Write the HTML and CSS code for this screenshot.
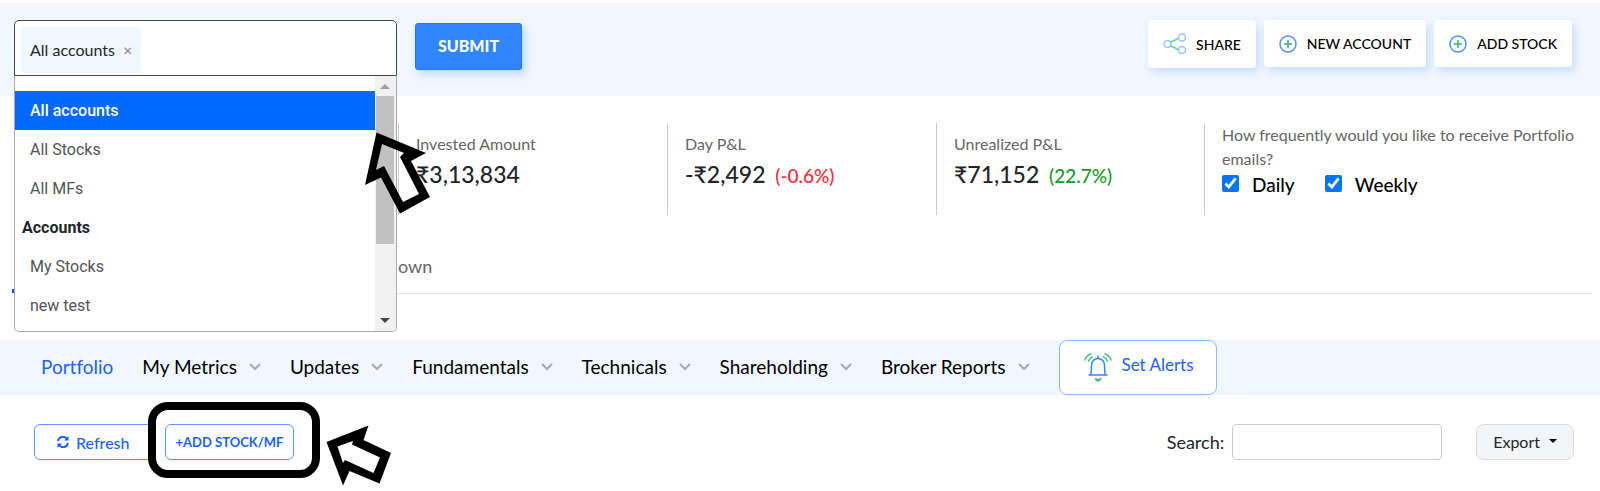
FILE: index.html
```html
<!DOCTYPE html>
<html lang="en">
<head>
<meta charset="UTF-8">
<title>Portfolio</title>
<link rel="stylesheet" href="styles.css">
</head>
<body>
<header class="topbar">
  <div class="account-select">
    <div class="select-box">
      <span class="chip">All accounts <button class="chip-remove" type="button" aria-label="Remove">×</button></span>
    </div>
    <div class="dropdown">
      <ul class="options" role="listbox" aria-label="Accounts">
        <li class="option selected" role="option" aria-selected="true">All accounts</li>
        <li class="option" role="option">All Stocks</li>
        <li class="option" role="option">All MFs</li>
        <li class="option-group">Accounts</li>
        <li class="option" role="option">My Stocks</li>
        <li class="option" role="option">new test</li>
      </ul>
      <div class="scrollbar">
        <svg width="20" height="20" viewBox="0 0 20 20"><path d="M5 13h10l-5-5z" fill="#9c9c9c"/></svg>
        <div class="thumb"></div>
        <svg class="scroll-down" width="20" height="20" viewBox="0 0 20 20"><path d="M5 7h10l-5 5z" fill="#444"/></svg>
      </div>
    </div>
    <svg class="pointer-select" width="68" height="86" viewBox="0 0 68 86"><path fill-rule="evenodd" d="M12.500 3.500L62 24L47 32L66 68L36 84.500L17 48.500L1 56ZM18 15L12 41L20 37L39 73L55 65L36 28L40 24Z"/></svg>
  </div>
  <button class="submit" type="button">SUBMIT</button>
  <div class="actions">
    <button class="action share" type="button">
      <svg width="24" height="22" viewBox="0 0 24 22" fill="none"><path d="M7 9.500l8-4M7 12.500l8 4" stroke="#5fdc9c" stroke-width="1.500"/><g stroke="#9cc3fb" stroke-width="1.500"><circle cx="4.500" cy="11" r="3.500"/><circle cx="19" cy="4.500" r="3.500"/><circle cx="19" cy="17" r="3.500"/></g></svg>
      SHARE
    </button>
    <button class="action" type="button">
      <svg width="18" height="18" viewBox="0 0 18 18" fill="none"><circle cx="9" cy="9" r="8" stroke="#4c92fb" stroke-width="1.500"/><path d="M9 5v8M5 9h8" stroke="#35b275" stroke-width="1.500"/></svg>
      NEW ACCOUNT
    </button>
    <button class="action" type="button">
      <svg width="18" height="18" viewBox="0 0 18 18" fill="none"><circle cx="9" cy="9" r="8" stroke="#4c92fb" stroke-width="1.500"/><path d="M9 5v8M5 9h8" stroke="#35b275" stroke-width="1.500"/></svg>
      ADD STOCK
    </button>
  </div>
</header>

<section class="summary">
  <div class="metric"></div>
  <div class="metric">
    <div class="label">Invested Amount</div>
    <div class="value">₹3,13,834</div>
  </div>
  <div class="metric">
    <div class="label">Day P&amp;L</div>
    <div class="value">-₹2,492 <span class="loss">(-0.6%)</span></div>
  </div>
  <div class="metric">
    <div class="label">Unrealized P&amp;L</div>
    <div class="value">₹71,152 <span class="gain">(22.7%)</span></div>
  </div>
  <div class="metric emails">
    <div class="label">How frequently would you like to receive Portfolio emails?</div>
    <div class="checks">
      <label><input type="checkbox" checked> Daily</label>
      <label><input type="checkbox" checked> Weekly</label>
    </div>
  </div>
</section>

<div class="tabs"><a class="tab" href="#">own</a></div>

<nav class="menu">
  <a class="active" href="#">Portfolio</a>
  <a href="#">My Metrics <svg width="12" height="8" viewBox="0 0 12 8"><path d="M1 1l5 5 5-5"/></svg></a>
  <a href="#">Updates <svg width="12" height="8" viewBox="0 0 12 8"><path d="M1 1l5 5 5-5"/></svg></a>
  <a href="#">Fundamentals <svg width="12" height="8" viewBox="0 0 12 8"><path d="M1 1l5 5 5-5"/></svg></a>
  <a href="#">Technicals <svg width="12" height="8" viewBox="0 0 12 8"><path d="M1 1l5 5 5-5"/></svg></a>
  <a href="#">Shareholding <svg width="12" height="8" viewBox="0 0 12 8"><path d="M1 1l5 5 5-5"/></svg></a>
  <a href="#">Broker Reports <svg width="12" height="8" viewBox="0 0 12 8"><path d="M1 1l5 5 5-5"/></svg></a>
  <button class="alerts" type="button">
    <svg width="28" height="30" viewBox="0 0 28 30" fill="none" stroke-linecap="round">
      <g stroke="#2f86ff" stroke-width="1.500"><path d="M5 22h18M7 21c0-2 .5-3 .5-9a6.500 6.500 0 0 1 13 0c0 6 .5 7 .5 9M14 5V3"/></g>
      <g stroke="#45bd84" stroke-width="1.500"><path d="M1 7q1.500-5 6-6M4.500 8q1-3 4-4M27 7q-1.500-5-6-6M23.500 8q-1-3-4-4M11.500 26q2.500 4 5 0q-2.500 1-5 0"/></g>
    </svg>
    <span>Set Alerts</span>
  </button>
</nav>

<div class="toolbar">
  <button class="outline refresh" type="button">
    <svg width="12" height="12" viewBox="0 0 12 12" fill="none" stroke="#1a62ff" stroke-width="2"><path d="M1 5a5 5 0 0 1 9-2M11 7a5 5 0 0 1-9 2"/><path d="M11.500 0v4.500H7zM.5 12V7.500H5z" fill="#1a62ff" stroke="none"/></svg>
    Refresh
  </button>
  <div class="highlight"><button class="outline add" type="button">+ADD STOCK/MF</button></div>
  <svg class="pointer-add" width="66" height="62" viewBox="0 0 66 62"><path fill-rule="evenodd" d="M.5 18L42.500 1.500L37.500 16L65 29L53.500 59.500L23.500 47L17 61.500ZM11.500 22.500L17 39L19 36L47.500 49L54 33.500L26 20.500L27 17Z"/></svg>
  <label class="search">Search: <input type="search"></label>
  <button class="export" type="button">Export <svg width="8" height="4" viewBox="0 0 8 4"><path d="M0 0h8L4 4z"/></svg></button>
</div>
</body>
</html>
```
FILE: styles.css
```css
* {
  box-sizing: border-box;
}
body {
  margin: 0;
  padding-top: 3px;
  background: #fff;
  color: #212529;
  font-family: Lato, "Liberation Sans", sans-serif;
  font-size: 16px;
  font-variant-ligatures: none;
}
button {
  font-family: inherit;
  cursor: pointer;
}
a {
  color: inherit;
  text-decoration: none;
}

/* top bar */
.topbar {
  display: flex;
  align-items: flex-start;
  height: 93px;
  padding: 17px 28px 0 14px;
  background: #f2f7ff;
}
.account-select {
  position: relative;
  width: 383px;
}
.select-box {
  height: 56px;
  padding: 6px;
  border: 1px solid #444;
  border-radius: 5px 5px 0 0;
  background: #fff;
}
.chip {
  display: inline-flex;
  align-items: center;
  gap: 8px;
  height: 46px;
  padding: 0 9px 2px;
  border-radius: 4px;
  background: #f2f7ff;
  font-size: 16px;
}
.chip-remove {
  padding: 0;
  border: 0;
  background: none;
  color: #888;
  font-size: 16px;
}
.dropdown {
  position: absolute;
  z-index: 2;
  top: 56px;
  left: 0;
  right: 0;
  display: flex;
  height: 256px;
  border: 1px solid #aaa;
  border-top: 0;
  border-radius: 0 0 5px 5px;
  background: #fff;
  overflow: hidden;
}
.options {
  flex: 1;
  margin: 0;
  padding: 15px 0 0;
  list-style: none;
  font-family: Roboto, sans-serif;
  line-height: 39px;
}
.option {
  padding-left: 15px;
  color: #555;
}
.option.selected {
  background: #0069ff;
  color: #fff;
  font-weight: 500;
}
.option-group {
  padding-left: 7px;
  font-weight: 700;
}
.scrollbar {
  display: flex;
  flex-direction: column;
  width: 21px;
  background: #f1f1f1;
}
.thumb {
  height: 148px;
  margin: 0 2px 0 1px;
  background: #c1c1c1;
}
.scroll-down {
  margin-top: auto;
}
.pointer-select {
  position: absolute;
  z-index: 3;
  top: 109px;
  left: 350px;
}
.submit {
  height: 47px;
  margin: 3px 0 0 18px;
  padding: 0 22px 2px;
  border: 1px solid #1677ff;
  border-radius: 3px;
  background: #2f86ff;
  box-shadow: 3px 4px 10px #b8d5ff;
  color: #fff;
  font-size: 16px;
  font-weight: 900;
}
.actions {
  display: flex;
  align-items: flex-start;
  gap: 8px;
  margin-left: auto;
}
.action {
  display: flex;
  align-items: center;
  gap: 10px;
  height: 47px;
  padding: 0 15px;
  border: 0;
  border-radius: 4px;
  background: #fff;
  box-shadow: 3px 4px 10px #c4dcff;
  color: #000;
  font-size: 14px;
  font-weight: 500;
}
.share {
  height: 48px;
  gap: 9px;
}

/* portfolio summary */
.summary {
  display: grid;
  grid-template-columns: 398px 269px 269px 268px 1fr;
  padding-top: 27px;
}
.metric {
  height: 92px;
  padding: 9px 17px;
  border-left: 1px solid #ccc;
}
.metric:first-child {
  border-left: 0;
}
.label {
  color: #666;
  line-height: 24px;
}
.value {
  color: #212529;
  font-size: 23px;
  font-weight: 500;
  line-height: 36px;
}
.value span {
  margin-left: 4px;
  font-size: 19px;
}
.value .loss {
  color: #ff2a35;
}
.value .gain {
  color: #149b28;
}
.emails {
  padding: 0 17px;
}
.checks {
  display: flex;
  gap: 30px;
  color: #000;
  font-size: 19px;
  font-weight: 500;
  line-height: 28px;
}
.checks label {
  display: flex;
  gap: 13px;
}
.checks input {
  width: 17px;
  height: 17px;
  margin: 4px 0 0;
  accent-color: #0075ff;
}
.tabs {
  display: flex;
  align-items: flex-end;
  height: 79px;
  margin: 0 8px 0 12px;
  border-bottom: 1px solid #e4e4e4;
}
/* marks the current tab */
.tabs::before {
  content: "";
  width: 120px;
  height: 4px;
  background: #1a4fff;
}
.tab {
  padding: 0 0 15px 266px;
  color: #666;
  font-size: 18px;
  line-height: 24px;
}

/* section menu */
.menu {
  display: flex;
  align-items: center;
  gap: 29px;
  height: 55px;
  margin-top: 46px;
  padding-left: 41px;
  background: #f2f7ff;
  color: #000;
  font-size: 19px;
}
.menu a {
  display: flex;
  align-items: center;
  gap: 12px;
  padding-bottom: 2px;
}
.menu a path {
  fill: none;
  stroke: #a3a9b8;
  stroke-width: 2;
}
.menu .active {
  color: #1a62ff;
}
.alerts {
  display: flex;
  align-items: center;
  gap: 10px;
  height: 55px;
  padding: 0 22px 0 24px;
  border: 1px solid #8dbbff;
  border-radius: 8px;
  background: #fff;
  color: #1a62ff;
  font-size: 17px;
}
.alerts span {
  padding-bottom: 6px;
}

/* table toolbar */
.toolbar {
  display: flex;
  align-items: flex-start;
  padding: 29px 26px 0 34px;
}
.outline {
  height: 36px;
  border: 1px solid #5b95ff;
  border-radius: 6px;
  background: #fff;
  color: #1a62ff;
}
.refresh {
  display: flex;
  align-items: center;
  gap: 7px;
  margin-right: -5px;
  padding: 0 22px;
  font-size: 16px;
  font-weight: 500;
}
.highlight {
  position: relative;
  margin-top: -22px;
  padding: 14px 18px 10px 9px;
  border: 8px solid #000;
  border-radius: 20px;
}
.add {
  padding: 0 10px;
  font-size: 13px;
  font-weight: 700;
}
.pointer-add {
  margin-left: 6px;
}
.search {
  display: flex;
  align-items: center;
  gap: 8px;
  margin-left: auto;
  font-size: 18px;
}
.search input {
  width: 210px;
  height: 36px;
  border: 1px solid #ccc;
  border-radius: 4px;
}
.export {
  display: flex;
  align-items: center;
  gap: 9px;
  height: 36px;
  margin-left: 34px;
  padding: 0 16px 2px;
  border: 1px solid #d8dadd;
  border-radius: 8px;
  background: #f3f5f8;
  color: #212529;
  font-size: 16px;
}
```
